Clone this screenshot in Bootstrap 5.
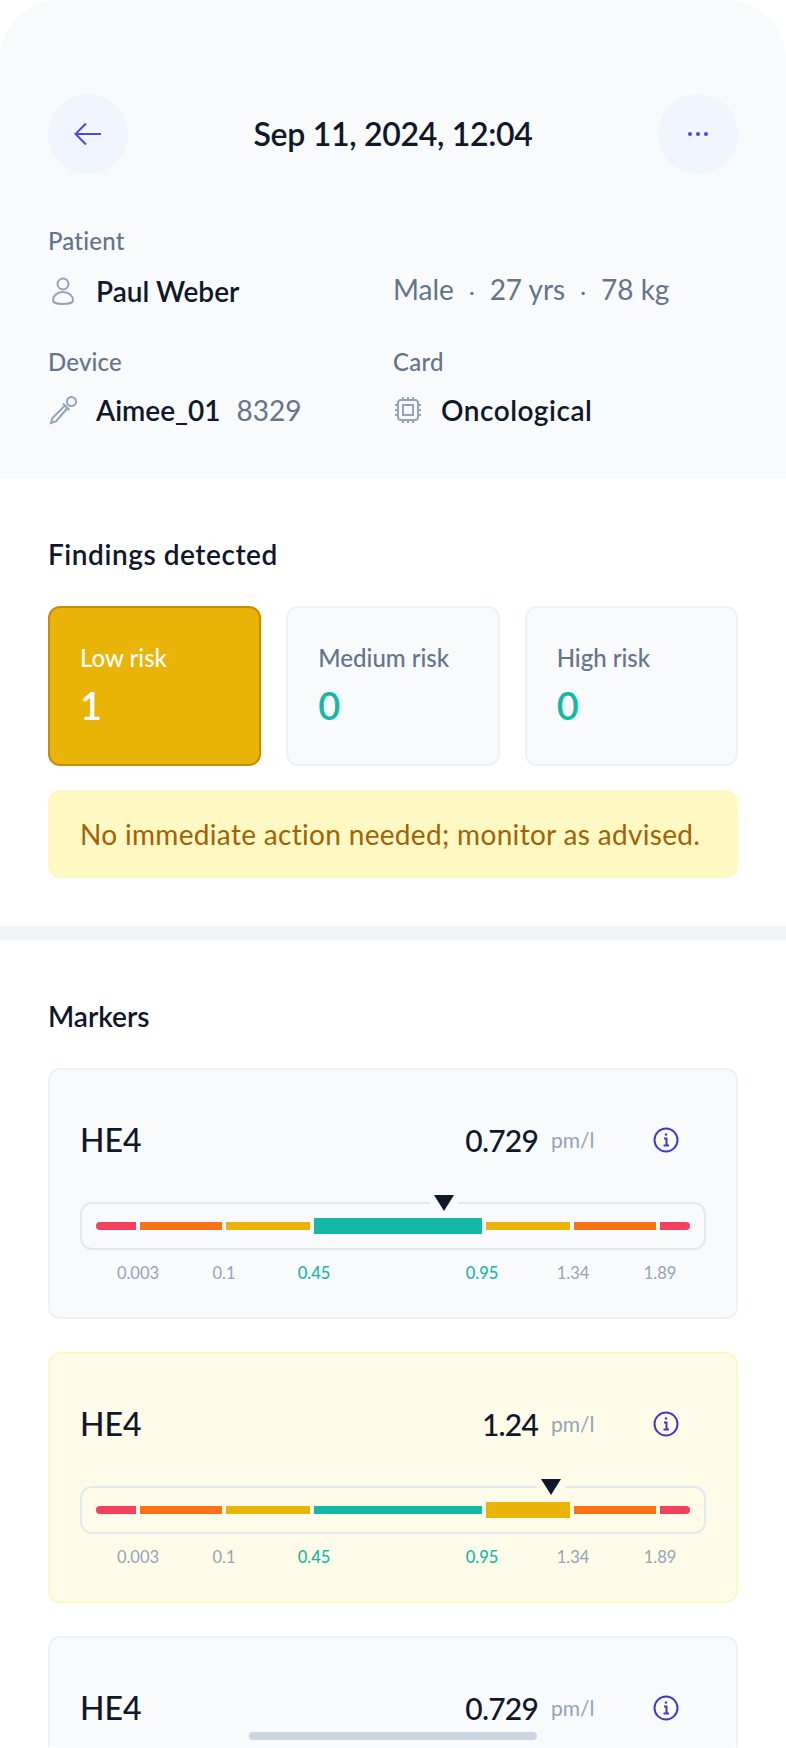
<!DOCTYPE html>
<html lang="en">
<head>
  <meta charset="UTF-8">
  <meta name="viewport" content="width=device-width, initial-scale=1.0">
  <title>Test result</title>
  <link href="https://cdn.jsdelivr.net/npm/bootstrap@5.3.3/dist/css/bootstrap.min.css" rel="stylesheet">
  <style>
    html, body { height: 1748px; overflow: hidden; }
    body { font-family: Lato, "Liberation Sans", sans-serif; background: #fff; color: #0f172a; font-size: 22px; }
    .screen { height: 1748px; overflow: hidden; position: relative; border-radius: 60px; }
    .top-panel { background: #f8fafc; height: 479px; padding: 94px 48px 0; }
    .round-btn { width: 80px; height: 80px; background: #f1f5fd; border: 0; padding: 0; }
    .page-title { font-size: 32px; font-weight: 600; letter-spacing: -0.3px; margin: 0; }
    .field-label { color: #64748b; font-size: 24px; font-weight: 500; letter-spacing: 0.2px; line-height: 28px; }
    .field-value { font-size: 28px; font-weight: 600; line-height: 36px; }
    .value-wide { letter-spacing: 0.5px; }
    .field-muted { color: #64748b; font-size: 28px; font-weight: 400; line-height: 36px; }
    .patient-row { margin-top: 53px; }
    .device-row { margin-top: 38px; }
    .line-gap { margin-top: 16px; }
    .col-first { width: 345px; flex: none; }
    .ico { width: 30px; flex: none; margin-right: 18px; color: #94a3b8; }
    .dot-sep { margin: 0 15px; font-size: 22px; }
    .findings { padding: 58px 48px 48px; height: 447px; }
    .block-title { font-size: 28px; font-weight: 600; line-height: 34px; margin: 0; }
    .title-wide { letter-spacing: 0.55px; }
    .risk-row { margin-top: 35px; gap: 25px; }
    .risk-box { flex: 1 1 0; height: 160px; background: #f8fafc; border: 2px solid #edf2f9; border-radius: 12px; padding: 35px 30px 0; color: #64748b; font-size: 24px; font-weight: 500; line-height: 30px; }
    .risk-box.is-low { background: #eab308; border-color: #ca8a04; color: #fff; }
    .risk-num { display: block; color: #14b8a6; font-size: 38px; font-weight: 600; line-height: 40px; margin-top: 12px; }
    .is-low .risk-num { color: #fff; }
    .advice { margin-top: 24px; height: 88px; background: #fef9c3; border-radius: 12px; color: #a16207; font-size: 28px; letter-spacing: 0.32px; padding: 0 32px; white-space: nowrap; }
    .band { height: 14px; background: #f1f5f9; }
    .markers { padding: 59px 48px 0; }
    .marker-list { margin-top: 35px; gap: 33px; }
    .marker-box { height: 251px; flex: none; background: #f8fafc; border: 2px solid #edf2f9; border-radius: 12px; padding: 0 30px; }
    .marker-box.is-warn { background: #fefce8; border-color: #fef9c3; }
    .marker-head { height: 130px; padding-top: 10px; }
    .marker-name { font-size: 32px; font-weight: 500; }
    .marker-value { font-size: 30px; font-weight: 500; letter-spacing: -0.8px; margin-left: auto; }
    .marker-unit { width: 42px; margin-left: 13px; color: #94a3b8; font-size: 21px; }
    .info-ico { width: 26px; height: 26px; margin: 0 27px 0 60px; color: #4338ca; }
    .scale-box { height: 48px; position: relative; border: 2px solid #e2e8f0; border-radius: 12px; padding: 0 14px; gap: 4px; margin-top: 2px; }
    .seg { height: 8px; }
    .seg.is-on { height: 16px; }
    .s-red { background: #f43f5e; }
    .s-orange { background: #f97316; }
    .s-yellow { background: #eab308; }
    .s-green { background: #14b8a6; }
    .w-a { width: 40px; border-radius: 4px 0 0 4px; }
    .w-b { width: 82px; }
    .w-c { width: 84px; }
    .w-d { width: 168px; }
    .w-e { width: 30px; border-radius: 0 4px 4px 0; }
    .pointer { position: absolute; top: -9px; width: 28px; height: 16px; margin-left: -14px; background: #f8fafc; }
    .is-warn .pointer { background: #fefce8; }
    .pointer svg { display: block; margin: 0 auto; }
    .tick-row { position: relative; height: 20px; margin-top: 13px; color: #94a3b8; font-size: 16.500px; line-height: 20px; }
    .tick { position: absolute; transform: translateX(-50%); }
    .tick.is-ok { color: #14b8a6; font-weight: 500; }
    .home-bar { position: absolute; left: 249px; bottom: 8px; width: 288px; height: 8px; border-radius: 4px; background: #cbd5e1; }
  </style>
</head>
<body>
  <div class="screen">
    <div class="top-panel">
      <div class="d-flex align-items-center justify-content-between">
        <button class="round-btn rounded-circle d-flex align-items-center justify-content-center" aria-label="Back">
          <svg width="28" height="24" viewBox="0 0 28 24" fill="none" stroke="#4f46e5" stroke-width="2"><path d="M27 12H2M12 1.500 1.500 12 12 22.500"/></svg>
        </button>
        <h1 class="page-title">Sep 11, 2024, 12:04</h1>
        <button class="round-btn rounded-circle d-flex align-items-center justify-content-center" aria-label="More">
          <svg width="20" height="6" viewBox="0 0 20 6" fill="#4f46e5"><circle cx="2" cy="3" r="2"/><circle cx="10" cy="3" r="2"/><circle cx="18" cy="3" r="2"/></svg>
        </button>
      </div>

      <div class="patient-row">
        <div class="field-label">Patient</div>
        <div class="d-flex align-items-center line-gap">
          <div class="d-flex align-items-center col-first">
            <svg class="ico" height="30" viewBox="0 0 30 30" fill="none" stroke="currentColor" stroke-width="2"><circle cx="15" cy="8" r="5.500"/><path d="M15 16c-6 0-10 4-10 8.500 0 2 4 3.500 10 3.500s10-1.500 10-3.500C25 20 21 16 15 16z"/></svg>
            <span class="field-value">Paul Weber</span>
          </div>
          <div class="field-muted">Male<span class="dot-sep">·</span>27 yrs<span class="dot-sep">·</span>78 kg</div>
        </div>
      </div>

      <div class="d-flex device-row">
        <div class="col-first">
          <div class="field-label">Device</div>
          <div class="d-flex align-items-center line-gap">
            <svg class="ico" height="30" viewBox="0 0 30 30" fill="none" stroke="currentColor" stroke-width="2"><circle cx="23.500" cy="6.500" r="4.500"/><path d="M15 8.500l6.500 6.500M17 10.500 4.500 23 3 28l5-1.500L19.500 13"/></svg>
            <span class="field-value">Aimee_01</span>
            <span class="field-muted ms-3">8329</span>
          </div>
        </div>
        <div>
          <div class="field-label">Card</div>
          <div class="d-flex align-items-center line-gap">
            <svg class="ico" height="30" viewBox="0 0 30 30" fill="none" stroke="currentColor" stroke-width="2"><rect x="5" y="5" width="20" height="20" rx="3"/><rect x="10" y="10" width="10" height="10"/><path d="M10 2v3M15 2v3M20 2v3M10 25v3M15 25v3M20 25v3M2 10h3M2 15h3M2 20h3M25 10h3M25 15h3M25 20h3"/></svg>
            <span class="field-value value-wide">Oncological</span>
          </div>
        </div>
      </div>
    </div>

    <section class="findings">
      <h2 class="block-title title-wide">Findings detected</h2>
      <div class="d-flex risk-row">
        <div class="risk-box is-low">Low risk<span class="risk-num">1</span></div>
        <div class="risk-box">Medium risk<span class="risk-num">0</span></div>
        <div class="risk-box">High risk<span class="risk-num">0</span></div>
      </div>
      <div class="advice d-flex align-items-center">No immediate action needed; monitor as advised.</div>
    </section>

    <div class="band"></div>

    <section class="markers">
      <h2 class="block-title">Markers</h2>
      <div class="d-flex flex-column marker-list">

        <div class="marker-box">
          <div class="d-flex align-items-center marker-head">
            <span class="marker-name">HE4</span>
            <span class="marker-value">0.729</span>
            <span class="marker-unit">pm/l</span>
            <svg class="info-ico" viewBox="0 0 26 26" fill="none" stroke="currentColor" stroke-width="2"><circle cx="13" cy="13" r="11.500"/><path d="M11 11.500h2.500V18M10.500 18.500h5.500"/><circle cx="13" cy="7.500" r="1.200" fill="currentColor" stroke="none"/></svg>
          </div>
          <div class="scale-box d-flex align-items-center">
            <div class="seg s-red w-a"></div><div class="seg s-orange w-b"></div><div class="seg s-yellow w-c"></div><div class="seg s-green w-d is-on"></div><div class="seg s-yellow w-c"></div><div class="seg s-orange w-b"></div><div class="seg s-red w-e"></div>
            <div class="pointer" style="left:362px"><svg width="20" height="16" viewBox="0 0 20 16" fill="#0f172a"><path d="M0 0h20L10 16z"/></svg></div>
          </div>
          <div class="tick-row">
            <span class="tick" style="left:58px">0.003</span><span class="tick" style="left:144px">0.1</span><span class="tick is-ok" style="left:234px">0.45</span><span class="tick is-ok" style="left:402px">0.95</span><span class="tick" style="left:493px">1.34</span><span class="tick" style="left:580px">1.89</span>
          </div>
        </div>

        <div class="marker-box is-warn">
          <div class="d-flex align-items-center marker-head">
            <span class="marker-name">HE4</span>
            <span class="marker-value">1.24</span>
            <span class="marker-unit">pm/l</span>
            <svg class="info-ico" viewBox="0 0 26 26" fill="none" stroke="currentColor" stroke-width="2"><circle cx="13" cy="13" r="11.500"/><path d="M11 11.500h2.500V18M10.500 18.500h5.500"/><circle cx="13" cy="7.500" r="1.200" fill="currentColor" stroke="none"/></svg>
          </div>
          <div class="scale-box d-flex align-items-center">
            <div class="seg s-red w-a"></div><div class="seg s-orange w-b"></div><div class="seg s-yellow w-c"></div><div class="seg s-green w-d"></div><div class="seg s-yellow w-c is-on"></div><div class="seg s-orange w-b"></div><div class="seg s-red w-e"></div>
            <div class="pointer" style="left:469px"><svg width="20" height="16" viewBox="0 0 20 16" fill="#0f172a"><path d="M0 0h20L10 16z"/></svg></div>
          </div>
          <div class="tick-row">
            <span class="tick" style="left:58px">0.003</span><span class="tick" style="left:144px">0.1</span><span class="tick is-ok" style="left:234px">0.45</span><span class="tick is-ok" style="left:402px">0.95</span><span class="tick" style="left:493px">1.34</span><span class="tick" style="left:580px">1.89</span>
          </div>
        </div>

        <div class="marker-box">
          <div class="d-flex align-items-center marker-head">
            <span class="marker-name">HE4</span>
            <span class="marker-value">0.729</span>
            <span class="marker-unit">pm/l</span>
            <svg class="info-ico" viewBox="0 0 26 26" fill="none" stroke="currentColor" stroke-width="2"><circle cx="13" cy="13" r="11.500"/><path d="M11 11.500h2.500V18M10.500 18.500h5.500"/><circle cx="13" cy="7.500" r="1.200" fill="currentColor" stroke="none"/></svg>
          </div>
        </div>
      </div>
    </section>

    <div class="home-bar"></div>
  </div>

  <script src="https://cdn.jsdelivr.net/npm/bootstrap@5.3.3/dist/js/bootstrap.bundle.min.js"></script>
</body>
</html>
